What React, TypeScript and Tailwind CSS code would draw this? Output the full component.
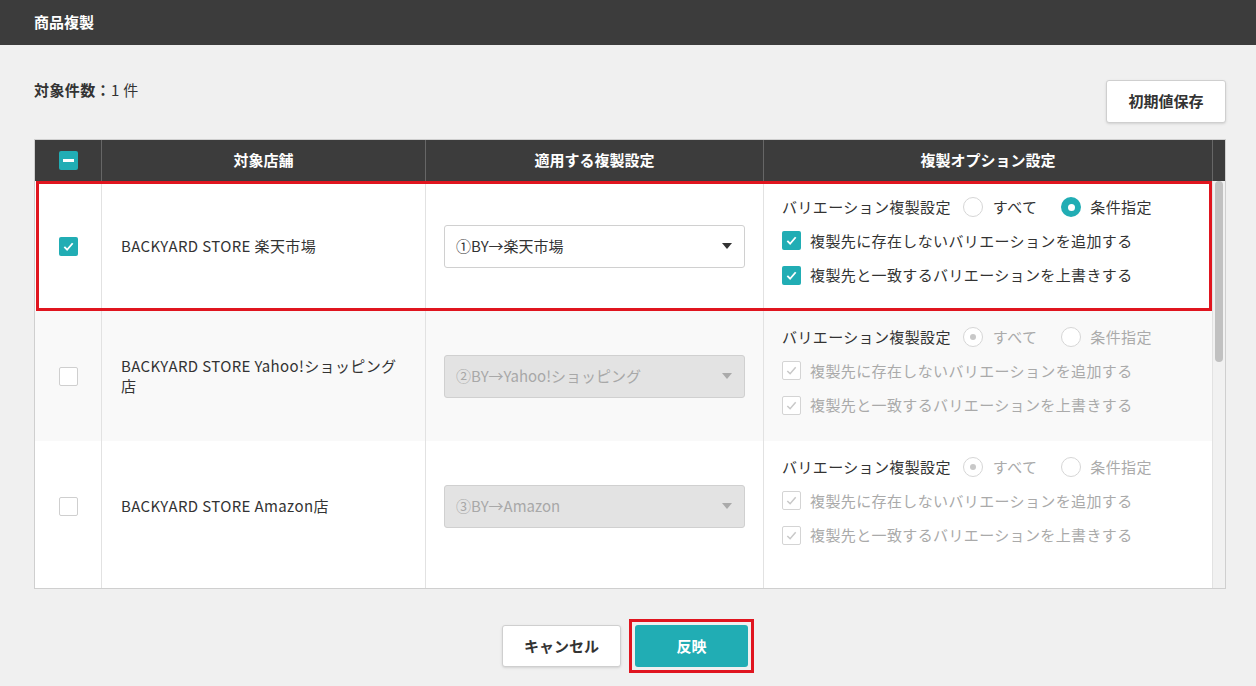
import React from "react";

const FONT = { fontFamily: '"Noto Sans CJK JP", "Noto Sans", sans-serif' };

function Check({ checked, disabled }: { checked?: boolean; disabled?: boolean }) {
  if (disabled)
    return (
      <span className="flex h-[19px] w-[19px] items-center justify-center rounded-[2px] border border-[#d4d4d4] bg-white">
        {checked && (
          <svg width="13" height="13" viewBox="0 0 14 14"><path d="M2.5 7.5l3 3 6-7" fill="none" stroke="#c8c8c8" strokeWidth="1.6" /></svg>
        )}
      </span>
    );
  if (checked)
    return (
      <span className="flex h-[19px] w-[19px] items-center justify-center rounded-[2px] bg-[#21adb4]">
        <svg width="13" height="13" viewBox="0 0 14 14"><path d="M2.5 7.5l3 3 6-7" fill="none" stroke="#fff" strokeWidth="2" /></svg>
      </span>
    );
  return <span className="block h-[19px] w-[19px] rounded-[2px] border border-[#cfcfcf] bg-white" />;
}

function Radio({ on, disabled }: { on?: boolean; disabled?: boolean }) {
  if (on && !disabled)
    return (
      <span className="flex h-[20px] w-[20px] items-center justify-center rounded-full bg-[#21adb4]">
        <span className="h-[7px] w-[7px] rounded-full bg-white" />
      </span>
    );
  return (
    <span className="flex h-[20px] w-[20px] items-center justify-center rounded-full border border-[#d6d6d6] bg-white">
      {on && <span className="h-[6px] w-[6px] rounded-full bg-[#c8c8c8]" />}
    </span>
  );
}

type Row = { store: string; setting: string; active: boolean };
const rows: Row[] = [
  { store: "BACKYARD STORE 楽天市場", setting: "①BY→楽天市場", active: true },
  { store: "BACKYARD STORE Yahoo!ショッピング店", setting: "②BY→Yahoo!ショッピング", active: false },
  { store: "BACKYARD STORE Amazon店", setting: "③BY→Amazon", active: false },
];

export default function App() {
  return (
    <div className="h-[686px] w-[1256px] overflow-hidden bg-[#f0f0f0] text-[#333]" style={FONT}>
      <div className="flex h-[45px] items-center bg-[#3c3c3c] px-[34px] text-[15px] font-bold text-white">商品複製</div>
      <div className="px-[30px] pt-[34px]">
        <div className="flex items-start justify-between pl-[4px]">
          <div className="text-[15px] font-bold tracking-wide">対象件数：<span className="font-normal">1 件</span></div>
          <button className="mt-[1px] h-[43px] w-[120px] rounded-[3px] border border-[#cfcfcf] bg-white text-[15px] font-bold shadow-sm">初期値保存</button>
        </div>
        <div className="ml-[4px] mt-[16px] w-[1192px] border border-[#cfcfcf] bg-white">
          <div className="flex h-[41px] bg-[#3c3c3c] text-[15px] font-bold text-white">
            <div className="flex w-[67px] items-center justify-center border-r border-[#666]">
              <span className="flex h-[19px] w-[19px] items-center justify-center rounded-[2px] bg-[#21adb4]"><span className="h-[3px] w-[11px] bg-white" /></span>
            </div>
            <div className="flex w-[324px] items-center justify-center border-r border-[#666]">対象店舗</div>
            <div className="flex w-[338px] items-center justify-center border-r border-[#666]">適用する複製設定</div>
            <div className="flex w-[449px] items-center justify-center border-r border-[#666]">複製オプション設定</div>
            <div className="flex-1" />
          </div>
          <div className="flex h-[407px] overflow-hidden">
            <div className="w-[1178px]">
              {rows.map((r, i) => (
                <div key={i} className={`relative flex h-[130px] ${i % 2 ? "bg-[#f9f9f9]" : "bg-white"}`}>
                  {r.active && <div className="pointer-events-none absolute inset-x-[1px] inset-y-0 border-[3px] border-[#e0151f]" />}
                  <div className="flex w-[67px] items-center justify-center border-r border-[#e2e2e2]">
                    <Check checked={r.active} />
                  </div>
                  <div className="flex w-[324px] items-center border-r border-[#e2e2e2] pl-[19px] pr-[24px] text-[15px] leading-[20px] tracking-wide">{r.store}</div>
                  <div className="flex w-[338px] items-center border-r border-[#e2e2e2] px-[18px]">
                    <div className={`flex h-[43px] w-full items-center justify-between rounded-[3px] border px-[11px] text-[15px] ${r.active ? "border-[#d0d0d0] bg-white" : "border-[#d0d0d0] bg-[#e3e3e3] text-[#a8a8a8]"}`}>
                      <span>{r.setting}</span>
                      <svg width="12" height="8" viewBox="0 0 12 8"><path d="M1 1h10L6 7z" fill={r.active ? "#333" : "#aaa"} /></svg>
                    </div>
                  </div>
                  <div className="w-[449px] border-r border-[#e2e2e2] pl-[18px] pt-[15px] text-[15px] tracking-wide">
                    <div className="flex items-center">
                      <span>バリエーション複製設定</span>
                      <span className="ml-[12px]"><Radio on={!r.active} disabled={!r.active} /></span>
                      <span className={`ml-[10px] ${r.active ? "" : "text-[#aaa]"}`}>すべて</span>
                      <span className="ml-[24px]"><Radio on={r.active} disabled={!r.active} /></span>
                      <span className={`ml-[9px] ${r.active ? "" : "text-[#aaa]"}`}>条件指定</span>
                    </div>
                    <div className="mt-[11px] flex items-center gap-[9px]">
                      <Check checked disabled={!r.active} />
                      <span className={r.active ? "" : "text-[#aaa]"}>複製先に存在しないバリエーションを追加する</span>
                    </div>
                    <div className="mt-[12px] flex items-center gap-[9px]">
                      <Check checked disabled={!r.active} />
                      <span className={r.active ? "" : "text-[#aaa]"}>複製先と一致するバリエーションを上書きする</span>
                    </div>
                  </div>
                </div>
              ))}
              <div className="flex h-[30px]">
                <div className="w-[67px] border-r border-[#e2e2e2]" />
                <div className="w-[324px] border-r border-[#e2e2e2]" />
                <div className="w-[338px] border-r border-[#e2e2e2]" />
                <div className="w-[449px] border-r border-[#e2e2e2]" />
              </div>
            </div>
            <div className="flex-1 bg-[#f1f1f1] px-[2px]">
              <div className="h-[181px] rounded-full bg-[#c1c1c1]" />
            </div>
          </div>
        </div>
        <div className="mt-[30px] flex items-center justify-center gap-[8px]">
          <button className="h-[42px] w-[119px] rounded-[3px] border border-[#cfcfcf] bg-white text-[15px] font-bold shadow-sm">キャンセル</button>
          <div className="border-[3px] border-[#e0151f] p-[3px]">
            <button className="h-[42px] w-[113px] rounded-[3px] bg-[#21adb4] text-[15px] font-bold text-white">反映</button>
          </div>
        </div>
      </div>
    </div>
  );
}
